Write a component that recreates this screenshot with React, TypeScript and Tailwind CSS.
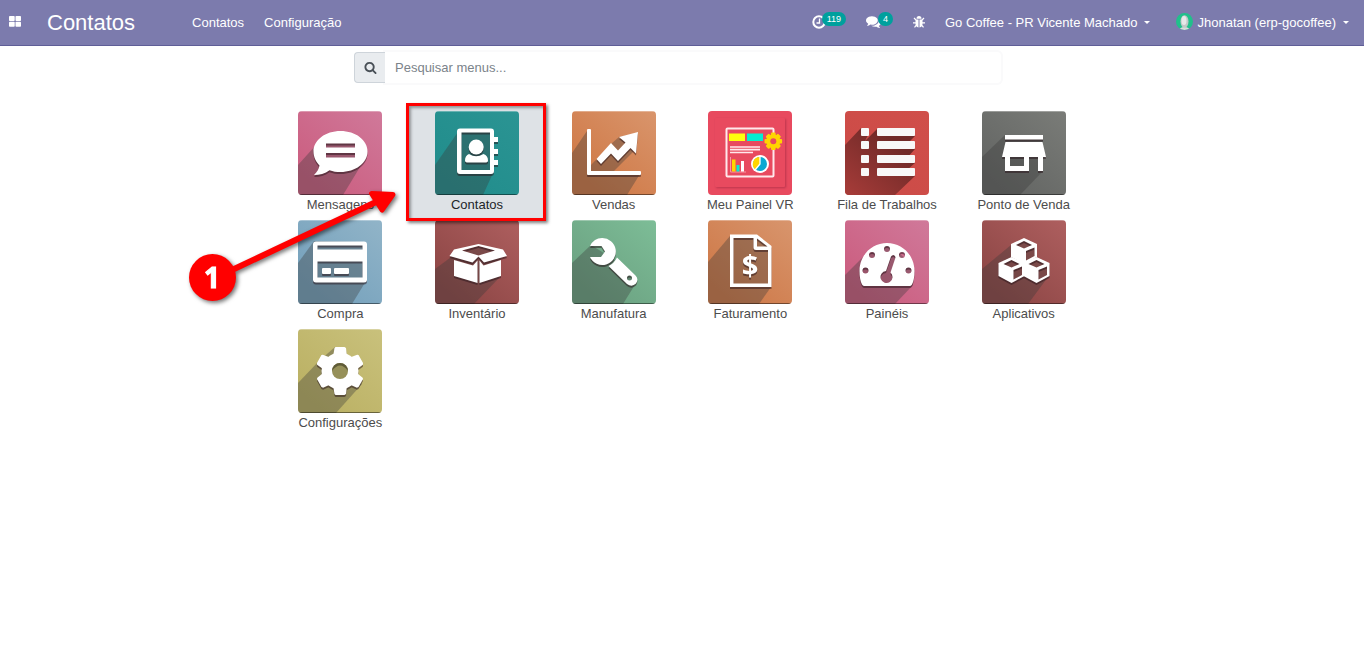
import type { ReactNode } from 'react'

type App = {
  id: string
  name: string
  from: string
  to: string
  shadow: string
  glyph: ReactNode
  active?: boolean
}

function Glyph({ children }: { children: ReactNode }) {
  return (
    <g fill="#fff" className="[filter:drop-shadow(0_2px_0_rgba(40,20,25,0.5))]">
      {children}
    </g>
  )
}

function Cube({ x, y }: { x: number; y: number }) {
  return (
    <g transform={`translate(${x} ${y})`}>
      <path
        fillRule="evenodd"
        d="M0 0 13 6V19L0 26-13 19V6ZM0 3-8 7 0 10.500 8 7ZM2 13V22.500L10.500 18V9.500Z"
      />
    </g>
  )
}

const apps: App[] = [
  {
    id: 'messages',
    name: 'Mensagens',
    from: '#cb5e80',
    to: '#d0799a',
    shadow: '0,54 18,34 42,24 66,34 62,56 45,84 0,84',
    glyph: (
      <Glyph>
        <path
          fillRule="evenodd"
          d="M42.500 20C57.500 20 69.500 29 69.500 40.500S57.500 61 42.500 61C38.500 61 35 60.500 31.500 59.200 27 62.500 21.500 64 16 64 19 61 21 58 21.500 54.500 18 51 15.500 46 15.500 40.500 15.500 29 27.500 20 42.500 20ZM28 32.500V36.500H57V32.500ZM28 42V46.500H57V42Z"
        />
      </Glyph>
    ),
  },
  {
    id: 'contacts',
    name: 'Contatos',
    from: '#218d8c',
    to: '#2b9493',
    shadow: '0,54 23,21 57,20 58,62 48,84 0,84',
    active: true,
    glyph: (
      <Glyph>
        <path
          fillRule="evenodd"
          d="M25 17.500H56Q59 17.500 59 20.500V26H63V31H59V38H63V43H59V49H63V54H59V60Q59 63 56 63H25Q22 63 22 60V20.500Q22 17.500 25 17.500ZM26.500 21.500V59H55V21.500Z"
        />
        <ellipse cx="41.200" cy="36" rx="7.500" ry="7.500" />
        <path d="M34 43Q41 47.500 48.500 43 53 44.500 53 49.500 53 51.500 50 51.500H33Q30 51.500 30 49.500 30 44.500 34 43Z" />
      </Glyph>
    ),
  },
  {
    id: 'sales',
    name: 'Vendas',
    from: '#cf7845',
    to: '#d9956c',
    shadow: '0,42 15,20 19,20 19,54 39,33 47,26 66,22 62,40 42,60 68,63 55,84 0,84',
    glyph: (
      <Glyph>
        <path d="M15 19Q15 18 16 18H18Q19 18 19 19V60H68Q69 60 69 61V63Q69 64 68 64H16Q15 64 15 63Z" />
        <path d="M24.500 48 39 32 46 39.500 53.500 31.500 47 26 66 21 64 42.500 58.500 37 46 50 39 42.500 29 53Z" />
      </Glyph>
    ),
  },
  {
    id: 'dashboard-vr',
    name: 'Meu Painel VR',
    from: '#e84a5f',
    to: '#e84a5f',
    shadow: '',
    glyph: (
      <>
        <rect x="7" y="7" width="70" height="69" rx="1" fill="#e84a5f" className="[filter:drop-shadow(1px_1px_1px_rgba(120,20,50,0.4))]" />
        <rect x="18.500" y="17.500" width="47" height="48" rx="1" fill="none" stroke="#ffe9ec" strokeWidth="2" />
        <path d="M21 22.500H37V30H21Z" fill="#ffff0c" />
        <path d="M39 22.500H55V30H39Z" fill="#06ecd1" />
        <path d="M22 36H52M22 38.700H52M22 41.500H45" stroke="#ffe9ec" strokeWidth="1.700" />
        <path d="M22.500 46V61H38" stroke="#f598a3" fill="none" />
        <path d="M24 48.500H27.500V60.500H24Z" fill="#ffd500" />
        <path d="M28.500 54H31.500V60.500H28.500Z" fill="#06ecd1" />
        <path d="M33 50H36V60.500H33Z" fill="#fff" />
        <circle cx="52" cy="53" r="9" fill="#fff" />
        <circle cx="52" cy="53" r="7" fill="#0aa8d2" />
        <path d="M52 53V46A7 7 0 0 0 47.500 58.500Z" fill="#ffd500" />
        <path d="M52 45.500V53L47 59" fill="none" stroke="#fff" strokeWidth="1.300" />
        <g fill="#ffd500">
          {[0, 45, 90, 135].map((angle) => (
            <rect key={angle} x="63" y="21.500" width="4.600" height="17.600" rx="1" transform={`rotate(${angle} 65.300 30.300)`} />
          ))}
          <circle cx="65.300" cy="30.300" r="7" />
        </g>
        <circle cx="65.300" cy="30.300" r="3" fill="#e84a5f" />
      </>
    ),
  },
  {
    id: 'queue',
    name: 'Fila de Trabalhos',
    from: '#cc4b47',
    to: '#d04f4a',
    shadow: '',
    glyph: (
      <>
        <defs>
          <linearGradient id="queue-shadow" x1="0" y1="1" x2="0.700" y2="0.200">
            <stop offset="0" stopColor="#a83c39" />
            <stop offset="1" stopColor="#702a28" />
          </linearGradient>
        </defs>
        <path
          d="M0 34 16 17 24 22 20 30 32 18 70 25 59 36 70 38 61 48 70 52 62 59 70 65 50 84H3Q0 84 0 81Z"
          fill="url(#queue-shadow)"
        />
        <g fill="#f8f8f8">
          {[17, 30, 44, 57].map((y) => (
            <g key={y}>
              <rect x="16" y={y} width="8" height="8" rx="1" />
              <rect x="32" y={y} width="38" height="8" rx="1" />
            </g>
          ))}
        </g>
      </>
    ),
  },
  {
    id: 'pos',
    name: 'Ponto de Venda',
    from: '#636563',
    to: '#7a7c78',
    shadow: '0,46 23,24 61,25 61,60 38,84 0,84',
    glyph: (
      <Glyph>
        <path d="M23 24H61V28.500H23Z" />
        <path fillRule="evenodd" d="M23.500 31H60.500L64 46H61V60H56V46H47V60H23V46H20ZM28 46V55H42V46Z" />
      </Glyph>
    ),
  },
  {
    id: 'purchase',
    name: 'Compra',
    from: '#75a1bc',
    to: '#91b4c8',
    shadow: '0,43 16,21 66,22 68,61 54,84 0,84',
    glyph: (
      <Glyph>
        <path
          fillRule="evenodd"
          d="M18 21.500H66Q69 21.500 69 24.500V59.500Q69 62.500 66 62.500H18Q15 62.500 15 59.500V24.500Q15 21.500 18 21.500ZM19.500 25.500V29.500H64.500V25.500ZM19.500 41.500V57.500H64.500V41.500Z"
        />
        <rect x="24" y="48" width="9" height="6" rx="1" />
        <rect x="36" y="48" width="15" height="6" rx="1" />
      </Glyph>
    ),
  },
  {
    id: 'inventory',
    name: 'Inventário',
    from: '#8d4645',
    to: '#ae5f5f',
    shadow: '0,49 19,35 43,26 66,31 64,58 39,84 0,84',
    glyph: (
      <Glyph>
        <path fillRule="evenodd" d="M43.500 24 68 29.500 72 36 49 42.500 43.500 36.500 37.500 42.500 14.500 36 19 29.500ZM43.500 26 27 30.500 43.500 35.500 60 30.500Z" />
        <path d="M19 40 38 45.500 42.500 40.500V63L19 56Z" />
        <path d="M66 40 48.500 45.500 44.500 40.500V63L66 56Z" />
      </Glyph>
    ),
  },
  {
    id: 'manufacturing',
    name: 'Manufatura',
    from: '#6ba181',
    to: '#7dbd97',
    shadow: '0,43 19,25 43,40 64,63 51,84 0,84',
    glyph: (
      <Glyph>
        <path d="M18 26Q22 18 30 18A13.500 13.500 0 1 1 18 37H29L33 31.500 29.500 26Z" />
        <path
          fillRule="evenodd"
          d="M45 37.500 63.500 55.500Q67 59 64 63.500 60 67.500 55 64L36.500 46Q42 43.500 45 37.500ZM57.500 55.500A2.500 2.500 0 1 0 57.500 60.500 2.500 2.500 0 1 0 57.500 55.500Z"
        />
      </Glyph>
    ),
  },
  {
    id: 'invoicing',
    name: 'Faturamento',
    from: '#ce7948',
    to: '#d8956d',
    shadow: '0,42 22,16 48,16 62,27 63,67 51,84 0,84',
    glyph: (
      <Glyph>
        <path
          fillRule="evenodd"
          d="M22 14.500H49L63.500 26V67H22ZM25.500 18V63.500H60V30H48Q45.500 30 45.500 27.500V18ZM49 18.500V26.500H59.500Z"
        />
        <text x="42" y="56" textAnchor="middle" fontSize="29" className="font-['Open_Sans',sans-serif] font-bold">
          $
        </text>
      </Glyph>
    ),
  },
  {
    id: 'dashboards',
    name: 'Painéis',
    from: '#cb5d7f',
    to: '#d0799a',
    shadow: '0,55 18,37 42,25 66,42 68,65 50,84 0,84',
    glyph: (
      <Glyph>
        <path
          fillRule="evenodd"
          d="M19.500 66Q18 66 17 64.500 14.500 59.500 14.500 51C14.500 35 27 23 42 23S69.500 35 69.500 51Q69.500 59.500 67 64.500 66 66 64.500 66ZM42 26A3 3 0 1 0 42 32 3 3 0 1 0 42 26ZM27 32A3 3 0 1 0 27 38 3 3 0 1 0 27 32ZM57 32A3 3 0 1 0 57 38 3 3 0 1 0 57 32ZM20.500 47.500A3 3 0 1 0 20.500 53.500 3 3 0 1 0 20.500 47.500ZM63.500 47.500A3 3 0 1 0 63.500 53.500 3 3 0 1 0 63.500 47.500ZM46 36.500 41 51A6 6 0 1 0 45.500 52.500L50.500 37.500Q50.500 35.500 48.500 35 46.800 35 46 36.500Z"
        />
      </Glyph>
    ),
  },
  {
    id: 'apps',
    name: 'Aplicativos',
    from: '#8d4645',
    to: '#ae5f5f',
    shadow: '0,49 29,25 42,20 54,25 55,38 66,44 66,57 46,84 0,84',
    glyph: (
      <Glyph>
        <Cube x={42} y={18} />
        <Cube x={29.5} y={37} />
        <Cube x={54.5} y={37} />
      </Glyph>
    ),
  },
  {
    id: 'settings',
    name: 'Configurações',
    from: '#bbb164',
    to: '#c9c17c',
    shadow: '0,54 21,32 37,18 64,55 38,84 0,84',
    glyph: (
      <>
        <Glyph>
          {[0, 60, 120].map((angle) => (
            <path
              key={angle}
              d="M36.500 19 37.500 18H46.500L48 19 49 28H35ZM36.500 65 37.500 66H46.500L48 65 49 56H35Z"
              transform={`rotate(${angle} 42 42)`}
            />
          ))}
          <circle cx="42" cy="42" r="18.500" />
        </Glyph>
        <circle cx="42" cy="42" r="8" fill="#969059" />
        <path d="M34 42A8 8 0 0 1 50 42Q42 31 34 42Z" fill="#5f5b38" />
      </>
    ),
  },
]

function AppTile({ app }: { app: App }) {
  return (
    <svg viewBox="0 0 84 84" className="h-[84px] w-[84px] rounded" aria-hidden="true">
      <defs>
        <linearGradient id={`bg-${app.id}`} x1="0.200" y1="0.900" x2="1" y2="0">
          <stop offset="0" stopColor={app.from} />
          <stop offset="1" stopColor={app.to} />
        </linearGradient>
      </defs>
      <rect width="84" height="84" fill={`url(#bg-${app.id})`} />
      {app.shadow && (
        <>
          <polygon points={app.shadow} fill="#393939" opacity="0.350" />
          <rect width="84" height="1" fill="#fff" opacity="0.300" />
          <rect y="83" width="84" height="1" fill="#000" opacity="0.450" />
        </>
      )}
      {app.glyph}
    </svg>
  )
}

function Caret() {
  return <span className="border-x-[3px] border-t-[3px] border-x-transparent border-t-white" />
}

function Navbar() {
  return (
    <header className="flex h-[46px] items-center border-b border-[#5f5e97] bg-[#7c7bad] pr-[15px] pl-[9px] text-[13px] whitespace-nowrap text-white">
      <button type="button" aria-label="Menu" className="mr-[26px]">
        <svg viewBox="0 0 12 11" className="mb-0.5 h-[11px] w-3" fill="currentColor">
          <rect width="5.700" height="5" rx="0.800" />
          <rect x="6.500" width="5.500" height="5" rx="0.800" />
          <rect y="5.800" width="5.700" height="5" rx="0.800" />
          <rect x="6.500" y="5.800" width="5.500" height="5" rx="0.800" />
        </svg>
      </button>
      <a href="#" className="text-[22px] leading-none">Contatos</a>
      <nav className="ml-[57px] flex gap-5">
        <a href="#contatos">Contatos</a>
        <a href="#configuracao">Configuração</a>
      </nav>

      <div className="ml-auto flex items-center">
        <button type="button" aria-label="Atividades" className="mr-5 flex items-center">
          <svg viewBox="0 0 14 14" className="mb-0.5 h-[14px] w-[14px]" fill="none" stroke="currentColor">
            <circle cx="7" cy="7" r="5.700" strokeWidth="2" />
            <path d="M7.500 3.500V8H4.500" strokeWidth="1.300" />
          </svg>
          <span className="-mt-[7px] -ml-1 rounded-full bg-[#00a09d] px-[5px] text-[9px] leading-[14px]">119</span>
        </button>
        <button type="button" aria-label="Conversas" className="mr-5 flex items-center">
          <svg viewBox="0 0 1792 1792" className="mb-0.5 h-[15px] w-[15px]" fill="currentColor">
            <path d="M1408 768q0 139-94 257t-256.500 186.500-353.500 68.500q-86 0-176-16-124 88-278 128-36 9-86 16h-3q-11 0-20.500-8t-11.500-21q-1-3-1-6.500t.5-6.500 2-6l2.500-5 3.500-5.500 4-5 4.500-5 4-4.500q5-6 23-25t26-29.500 22.500-29 25-38.500 20.500-44q-124-72-195-177t-71-224q0-139 94-257t256.500-186.500 353.500-68.500 353.500 68.500 256.500 186.500 94 257zm384 256q0 120-71 224.500t-195 176.500q10 24 20.500 44t25 38.500 22.500 29 26 29.500 23 25q1 1 4 4.500t4.500 5 4 5 3.500 5.500l2.500 5 2 6 .5 6.500-1 6.500q-3 14-13 22t-22 7q-50-7-86-16-154-40-278-128-90 16-176 16-271 0-472-132 58 4 88 4 161 0 309-45t264-129q125-92 192-212t67-254q0-77-23-152 129 71 204 178t75 230z" />
          </svg>
          <span className="-mt-[7px] -ml-[3px] rounded-full bg-[#00a09d] px-[5px] text-[9px] leading-[14px]">4</span>
        </button>
        <button type="button" aria-label="Depurar" className="mr-5">
          <svg viewBox="0 0 12 12" className="mb-0.5 h-3 w-3" fill="currentColor">
            <path d="M3.500 2.700Q3.500 0 6 0T8.500 2.700Z" />
            <path d="M5.500 4V11.500Q2.500 11 2.500 7.500V3.500H5.500ZM6.500 4V11.500Q9.500 11 9.500 7.500V3.500H6.500Z" />
            <path d="M1 2 3 4M11 2 9 4M0 6.800H3M12 6.800H9M1.500 11.300 3.500 9M10.500 11.300 8.500 9" stroke="currentColor" strokeWidth="1.200" />
          </svg>
        </button>
        <button type="button" className="mr-[26px] flex items-center gap-[7px]">
          Go Coffee - PR Vicente Machado
          <Caret />
        </button>
        <button type="button" className="flex items-center gap-[7px]">
          <span className="flex items-center gap-1">
            <svg viewBox="0 0 17 17" className="mb-0.5 h-[17px] w-[17px] rounded-full" aria-hidden="true">
              <rect width="17" height="17" fill="#21c08b" />
              <ellipse cx="8.500" cy="17" rx="5.500" ry="3" fill="#d9dcdc" />
              <ellipse cx="8.500" cy="8.500" rx="4" ry="6.300" fill="#c3c8c8" />
              <ellipse cx="8" cy="7.500" rx="2.500" ry="4.500" fill="#e6e8e8" />
            </svg>
            Jhonatan (erp-gocoffee)
          </span>
          <Caret />
        </button>
      </div>
    </header>
  )
}

function StepArrow() {
  return (
    <svg
      viewBox="0 0 220 124"
      className="pointer-events-none absolute top-20 -left-[88px] z-20 h-[124px] w-[220px] [filter:drop-shadow(2px_2px_2px_rgba(0,0,0,0.55))]"
      aria-hidden="true"
    >
      <g fill="#f00" stroke="#f00" strokeLinejoin="round">
        <path d="M48 84 192 16" strokeWidth="6" />
        <path d="M187.500 7.500 209 8.500 198 24Z" strokeWidth="5" />
        <circle cx="28.500" cy="91.500" r="23.500" stroke="none" />
      </g>
      <text x="28" y="102" textAnchor="middle" fontSize="28" fill="#fff" stroke="#fff" className="font-['Noto_Sans',sans-serif] font-bold">
        1
      </text>
    </svg>
  )
}

export default function App() {
  return (
    <div className="min-h-screen bg-white font-['Liberation_Sans',Arial,sans-serif] text-[13px] text-[#4c4c4c]">
      <Navbar />
      <main className="mx-auto max-w-[820px] pt-1.5">
        <form className="mr-[91px] ml-[82px] flex h-[31px]" role="search">
          <button
            type="submit"
            aria-label="Pesquisar"
            className="relative z-10 flex w-[31px] items-center justify-center rounded-l border border-r-0 border-[#ced4da] bg-[#e9ecef] text-[#495057]"
          >
            <svg viewBox="0 0 1792 1792" className="h-[13px] w-[13px]" fill="currentColor">
              <path d="M1216 832q0-185-131.500-316.500t-316.500-131.500-316.500 131.500-131.500 316.500 131.500 316.500 316.500 131.500 316.500-131.500 131.500-316.500zm512 832q0 52-38 90t-90 38q-54 0-90-38l-343-342q-179 124-399 124-143 0-273.500-55.500t-225-150-150-225-55.500-273.500 55.500-273.500 150-225 225-150 273.500-55.500 273.500 55.500 225 150 150 225 55.500 273.500q0 220-124 399l343 343q37 37 37 90z" />
            </svg>
          </button>
          <input
            type="search"
            aria-label="Pesquisar menus"
            placeholder="Pesquisar menus..."
            className="min-w-0 flex-1 rounded-r bg-white px-2.5 shadow-[0_0_0_2px_#fafafb] outline-none placeholder:text-[#7b838a]"
          />
        </form>

        <div className="relative mt-[23px]">
          <div className="grid grid-cols-3 sm:grid-cols-6">
            {apps.map((app) => (
              <a
                key={app.id}
                href={`#${app.id}`}
                className={`relative flex h-[109px] flex-col items-center pt-[5px] ${app.active ? 'z-10 text-[#212529]' : ''}`}
              >
                {app.active && (
                  <span className="absolute -top-[3px] -right-px -bottom-1.5 -left-[3px] -z-10 border-[3px] border-[#f00] bg-[#dee2e6] shadow-[2px_2px_3px_rgba(0,0,0,0.5),inset_2px_2px_3px_rgba(0,0,0,0.35)]" />
                )}
                <AppTile app={app} />
                <span className="leading-5 whitespace-nowrap">{app.name}</span>
              </a>
            ))}
          </div>
          <StepArrow />
        </div>
      </main>
    </div>
  )
}
